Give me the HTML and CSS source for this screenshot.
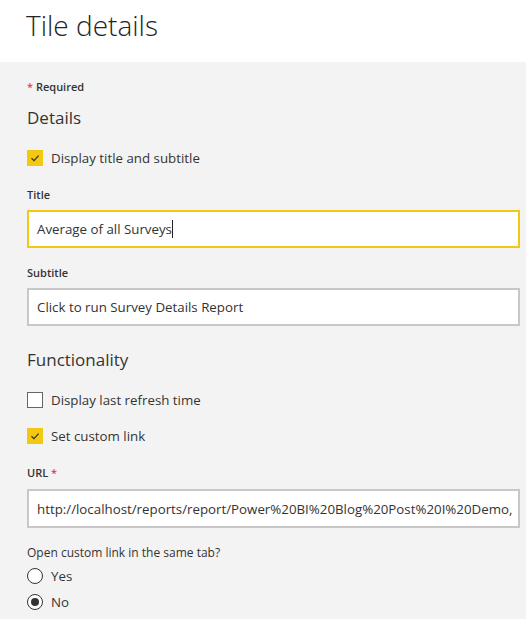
FILE: index.html
```html
<!DOCTYPE html>
<html lang="en">
<head>
  <meta charset="UTF-8">
  <title>Tile details</title>
  <link rel="stylesheet" href="styles.css">
</head>
<body>
  <div class="header">
    <h1 class="title">Tile details</h1>
  </div>

  <div class="content">
    <div class="required"><span class="star">*</span> Required</div>

    <h2 class="section">Details</h2>
    <div class="check-row">
      <span class="checkbox checked">
        <svg viewBox="0 0 16 16" width="16" height="16"><path d="M4.5 8.2 L7 10.6 L11.6 5.6" fill="none" stroke="#333" stroke-width="1.2"/></svg>
      </span>
      <span class="check-label">Display title and subtitle</span>
    </div>

    <label class="field-label">Title</label>
    <div class="textbox focused">Average of all Surveys<span class="caret"></span></div>

    <label class="field-label">Subtitle</label>
    <div class="textbox">Click to run Survey Details Report</div>

    <h2 class="section section-func">Functionality</h2>
    <div class="check-row">
      <span class="checkbox"></span>
      <span class="check-label">Display last refresh time</span>
    </div>
    <div class="check-row">
      <span class="checkbox checked">
        <svg viewBox="0 0 16 16" width="16" height="16"><path d="M4.5 8.2 L7 10.6 L11.6 5.6" fill="none" stroke="#333" stroke-width="1.2"/></svg>
      </span>
      <span class="check-label">Set custom link</span>
    </div>

    <label class="field-label">URL <span class="star">*</span></label>
    <div class="textbox url">http://localhost/reports/report/Power%20BI%20Blog%20Post%20I%20Demo,</div>

    <div class="question">Open custom link in the same tab?</div>
    <div class="radio-row">
      <span class="radio"></span>
      <span class="check-label">Yes</span>
    </div>
    <div class="radio-row">
      <span class="radio selected"></span>
      <span class="check-label">No</span>
    </div>
  </div>
</body>
</html>
```

FILE: styles.css
```css
:root {
  --text: #333333;
  --accent: #f2c811;
  --border: #c8c8c8;
  --panel: #f3f3f3;
  --danger: #e81123;
}

body {
  margin: 0;
  width: 526px;
  height: 619px;
  overflow: hidden;
  font-family: "Open Sans", "Noto Sans", sans-serif;
  color: var(--text);
  background: var(--panel);
}

.header {
  height: 62px;
  background: #ffffff;
  padding-left: 26px;
  box-sizing: border-box;
}

.title {
  margin: 0;
  padding-top: 6px;
  font-size: 28px;
  font-weight: 300;
  line-height: 38px;
  color: #252423;
}

.content {
  padding: 16px 6px 0 27px;
  display: flex;
  flex-direction: column;
}

.required {
  font-size: 11px;
  font-weight: 600;
  line-height: 18px;
}

.star {
  color: var(--danger);
  font-weight: 400;
}

.section {
  margin: 10px 0 0;
  font-size: 17px;
  font-weight: 400;
  line-height: 24px;
}

.section-func {
  margin-top: 22px;
}

.check-row,
.radio-row {
  display: flex;
  align-items: center;
  gap: 8px;
  height: 20px;
  margin-top: 16px;
}

.section + .check-row {
  margin-top: 18px;
}

.radio-row {
  margin-top: 6px;
}

.check-label {
  font-size: 13.3px;
  line-height: 20px;
}

.checkbox {
  width: 16px;
  height: 16px;
  box-sizing: border-box;
  border: 1px solid #666666;
  background: #ffffff;
  display: flex;
}

.checkbox.checked {
  border: none;
  background: var(--accent);
}

.field-label {
  margin-top: 16px;
  font-size: 11px;
  font-weight: 600;
  line-height: 18px;
}

.check-row + .field-label {
  margin-top: 18px;
}

.textbox {
  margin-top: 6px;
  height: 38px;
  box-sizing: border-box;
  border: 2px solid var(--border);
  background: #ffffff;
  padding: 0 8px;
  display: flex;
  align-items: center;
  font-size: 13.3px;
  white-space: nowrap;
  overflow: hidden;
}

.textbox.focused {
  border-color: var(--accent);
}

.caret {
  display: inline-block;
  width: 1px;
  height: 18px;
  background: #222222;
}

.url {
  margin-top: 7px;
  height: 39px;
}

.question {
  margin-top: 16px;
  font-size: 12px;
  line-height: 18px;
}

.question + .radio-row {
  margin-top: 4px;
}

.radio {
  width: 16px;
  height: 16px;
  box-sizing: border-box;
  border: 1px solid #333333;
  border-radius: 50%;
  background: #ffffff;
  display: flex;
  align-items: center;
  justify-content: center;
}

.radio.selected::after {
  content: "";
  width: 8px;
  height: 8px;
  border-radius: 50%;
  background: #333333;
}
```
